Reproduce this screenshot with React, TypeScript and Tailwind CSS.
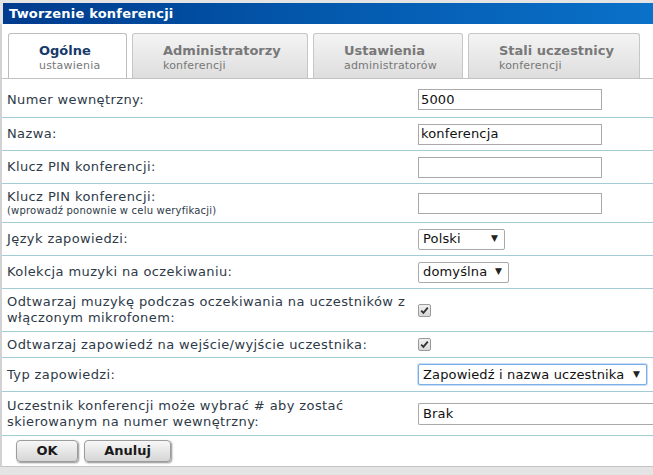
import type { ReactNode } from 'react';

const tabs = [
  { title: 'Ogólne', sub: 'ustawienia', w: 'w-[119px]', active: true },
  { title: 'Administratorzy', sub: 'konferencji', w: 'w-[176px]' },
  { title: 'Ustawienia', sub: 'administratorów', w: 'w-[150px]' },
  { title: 'Stali uczestnicy', sub: 'konferencji', w: 'w-[172px]' },
];

function Row({ label, h, children, extra = '' }: { label: ReactNode; h: string; children?: ReactNode; extra?: string }) {
  return (
    <div className={`flex items-center border-b border-[#a3cbd4] ${h} ${extra}`}>
      <div className="w-[416px] shrink-0 pl-[5px] text-[13px] leading-[16px] text-[#2e3a48]">{label}</div>
      <div className="flex-1 flex items-center tracking-[0.15px]">{children}</div>
    </div>
  );
}

function TextInput({ value = '' }: { value?: string }) {
  return (
    <div className="w-[184px] h-[21px] border border-[#a9a9a9] bg-white flex items-center pl-[2px] text-[13px] text-[#111]">
      {value}
    </div>
  );
}

function Select({ value, w, focus }: { value: string; w: string; focus?: boolean }) {
  return (
    <div
      className={`${w} h-[21px] rounded-[2px] border bg-white flex items-center justify-between pl-[4px] pr-[6px] text-[13px] text-[#111] ${
        focus ? 'border-[#79aee6] shadow-[0_0_0_1px_#c7ddf5]' : 'border-[#a9a9a9]'
      }`}
    >
      <span>{value}</span>
      <span className="text-[9px] text-[#222]">▼</span>
    </div>
  );
}

function Check() {
  return (
    <span className="w-[13px] h-[13px] border border-[#9a9a9a] rounded-[2px] bg-gradient-to-b from-[#f0f0f0] to-[#d8d8d8] flex items-center justify-center">
      <svg width="9" height="9" viewBox="0 0 9 9">
        <path d="M1.2 4.6 L3.4 6.8 L7.8 1.6" fill="none" stroke="#333" strokeWidth="1.8" />
      </svg>
    </span>
  );
}

function Button({ children, w }: { children: ReactNode; w: string }) {
  return (
    <div
      className={`${w} h-[22px] rounded-[4px] border border-[#9c9c9c] bg-gradient-to-b from-[#f7f7f7] to-[#d6d6d6] shadow-[1px_1px_2px_rgba(0,0,0,0.45)] flex items-center justify-center text-[13px] font-bold tracking-normal text-[#1a1a1a]`}
    >
      {children}
    </div>
  );
}

export default function App() {
  return (
    <div className="w-[653px] h-[475px] overflow-hidden bg-[#e4e4e4] pt-[3px] tracking-[0.4px] font-['Verdana','DejaVu_Sans',sans-serif]">
      <div className="ml-[3px] h-[21px] bg-gradient-to-r from-[#003b8e] via-[#0459ad] to-[#0a71c9] text-white font-bold text-[13px] tracking-[0.2px] pl-[6px] flex items-center">
        Tworzenie konferencji
      </div>
      <div className="border-l-[2px] border-[#d2d2d2] bg-white border-b border-b-[#c4c4c4]">
        <div className="flex gap-[5px] pt-[10px] pl-[6px] border-b border-[#c2c2c2] h-[55px] items-end">
          {tabs.map((t) => (
            <div
              key={t.title}
              className={`${t.w} shrink-0 whitespace-nowrap h-[45px] pl-[30px] pt-[8px] rounded-t-[3px] border border-b-0 ${
                t.active
                  ? 'bg-white border-[#bdbdbd]'
                  : 'bg-gradient-to-b from-[#f4f4f4] to-[#dedede] border-[#c6c6c6]'
              }`}
            >
              <div
                className={`text-[13px] font-bold tracking-normal leading-[17px] ${
                  t.active ? 'text-[#173a6b]' : 'text-[#787878]'
                }`}
              >
                {t.title}
              </div>
              <div className="text-[11px] leading-[14px] tracking-[0.2px] text-[#777]">{t.sub}</div>
            </div>
          ))}
        </div>
        <Row label="Numer wewnętrzny:" h="h-[39px]" extra="pt-[3px]">
          <TextInput value="5000" />
        </Row>
        <Row label="Nazwa:" h="h-[33px]">
          <TextInput value="konferencja" />
        </Row>
        <Row label="Klucz PIN konferencji:" h="h-[33px]">
          <TextInput />
        </Row>
        <Row
          label={
            <>
              Klucz PIN konferencji:
              <div className="text-[10px] leading-[12px] tracking-[0.2px]">(wprowadź ponownie w celu weryfikacji)</div>
            </>
          }
          h="h-[39px]"
        >
          <TextInput />
        </Row>
        <Row label="Język zapowiedzi:" h="h-[33px]">
          <Select value="Polski" w="w-[87px]" />
        </Row>
        <Row label="Kolekcja muzyki na oczekiwaniu:" h="h-[33px]">
          <Select value="domyślna" w="w-[91px]" />
        </Row>
        <Row
          label={
            <>
              Odtwarzaj muzykę podczas oczekiwania na uczestników z<br />
              włączonym mikrofonem:
            </>
          }
          h="h-[43px]"
        >
          <Check />
        </Row>
        <Row label="Odtwarzaj zapowiedź na wejście/wyjście uczestnika:" h="h-[26px]">
          <Check />
        </Row>
        <Row label="Typ zapowiedzi:" h="h-[34px]">
          <Select value="Zapowiedź i nazwa uczestnika" w="w-[229px]" focus />
        </Row>
        <Row
          label={
            <>
              Uczestnik konferencji może wybrać # aby zostać<br />
              skierowanym na numer wewnętrzny:
            </>
          }
          h="h-[44px]"
        >
          <div className="w-[250px] h-[22px] rounded-l-[2px] border border-[#a9a9a9] border-r-0 bg-white flex items-center pl-[4px] text-[13px] text-[#111]">
            Brak
          </div>
        </Row>
        <div className="h-[30px] flex items-center gap-[6px] pl-[14px]">
          <Button w="w-[62px]">OK</Button>
          <Button w="w-[87px]">Anuluj</Button>
        </div>
      </div>
    </div>
  );
}
